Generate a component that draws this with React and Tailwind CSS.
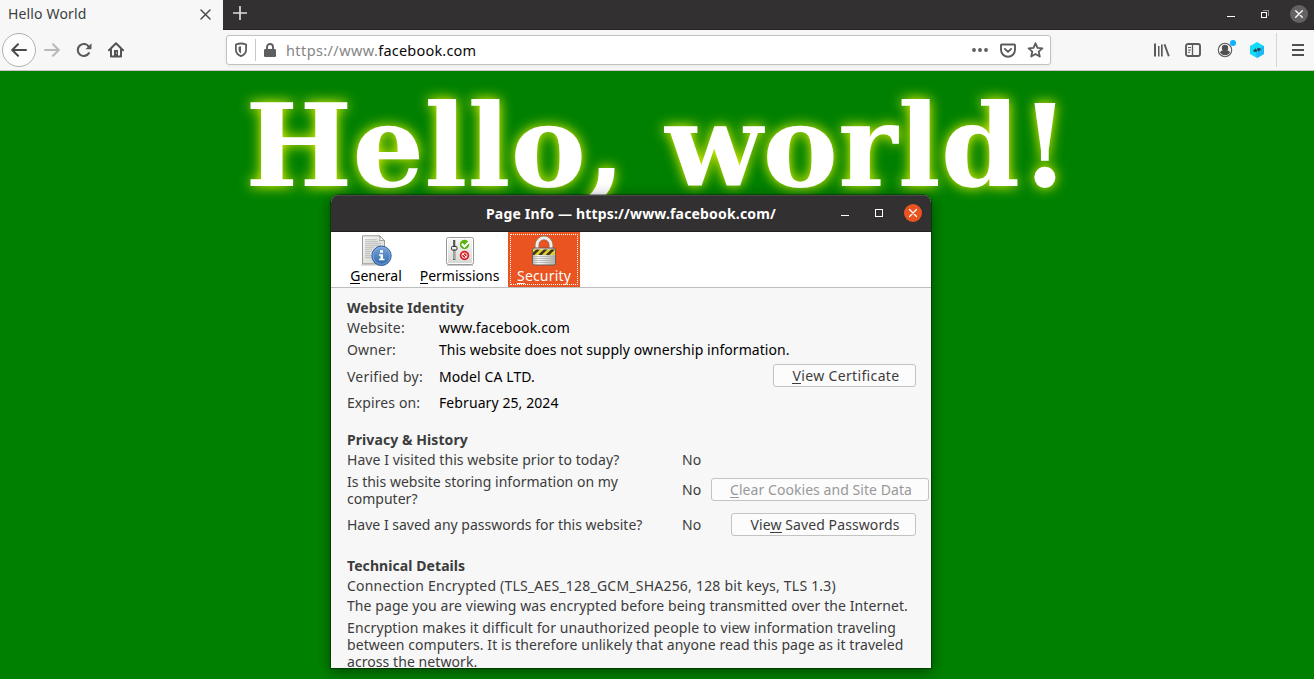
import React from 'react';

function Key({ children }) {
  return <span className="relative after:absolute after:inset-x-0 after:bottom-[1px] after:h-px after:bg-current">{children}</span>;
}

function TabBar() {
  return (
    <div className="flex h-[30px] bg-[#333031]">
      <div className="flex w-[223px] items-center justify-between bg-[#f7f7f7] pb-[3px] pl-2 pr-[12px]">
        <span className="tracking-[0.15px] text-[#3d3d3d]">Hello World</span>
        <svg width="11" height="11" viewBox="0 0 11 11" className="mt-[2px]" stroke="#4c4c4c" strokeWidth="1.5" strokeLinecap="round"><path d="M1 1l9 9M10 1l-9 9" /></svg>
      </div>
      <div className="flex flex-1 items-center border-b border-[#242122] pb-px pl-[10px] pr-[6px]">
        <svg width="14" height="14" viewBox="0 0 14 14" className="-mt-[2px]" stroke="#dedddd" strokeWidth="1.7" strokeLinecap="round"><path d="M7 .5v13M.5 7h13" /></svg>
        <div className="flex-1" />
        <svg width="8" height="10" viewBox="0 0 8 10" shapeRendering="crispEdges"><path d="M0 7h8v1H0z" fill="#fff" /></svg>
        <svg width="8" height="8" viewBox="0 0 8 8" className="ml-[26px] mr-[21px]" fill="none" shapeRendering="crispEdges"><path d="M2 .5h5.500v5.500" stroke="#918f90" /><path d="M.5 2.500h5v5h-5z" stroke="#fff" /></svg>
        <svg width="18" height="18" viewBox="0 0 18 18" className="mt-[-1px]"><circle cx="9" cy="9" r="9" fill="#646263" /><path d="M5.700 5.700l6.600 6.600M12.300 5.700l-6.600 6.600" stroke="#fff" strokeWidth="1.300" strokeLinecap="round" /></svg>
      </div>
    </div>
  );
}

function AddressBar() {
  return (
    <div className="ml-[102px] flex h-[30px] w-[825px] items-center rounded-[3px] border border-[#c1c1c1] bg-white shadow-[0_1px_4px_rgba(0,0,0,0.06)]">
      <svg width="14" height="16" viewBox="0 0 14 16" className="ml-[7px]"><path d="M7 1.500c1.800 0 3.500.4 5.100 1v5.200c0 3-1.900 5.200-5.100 6.500-3.200-1.300-5.100-3.500-5.100-6.500V2.500c1.600-.6 3.300-1 5.100-1z" fill="none" stroke="#5e5e5e" strokeWidth="1.800" strokeLinejoin="round" /><path d="M7 4.300c-1 0-1.700.2-2.400.4v3c0 1.700.9 2.900 2.400 3.800z" fill="#5e5e5e" /></svg>
      <div className="ml-[7px] h-[22px] w-px bg-[#c8c8c8]" />
      <svg width="12" height="14" viewBox="0 0 12 14" className="ml-[8px]"><path d="M3 7V4a3 3 0 016 0v3" fill="none" stroke="#5e5e5e" strokeWidth="1.900" /><rect x="0" y="6" width="12" height="8" rx="1.200" fill="#5e5e5e" /></svg>
      <span className="ml-[10px] mt-[2px] text-[14.5px] tracking-[0.4px] text-[#858585]">https://www.<span className="tracking-[0.2px] text-[#0a0a0a]">facebook.com</span></span>
      <div className="flex-1" />
      <svg width="16" height="4" viewBox="0 0 16 4" fill="#5b5b5b"><circle cx="2" cy="2" r="1.900" /><circle cx="8" cy="2" r="1.900" /><circle cx="14" cy="2" r="1.900" /></svg>
      <svg width="16" height="15" viewBox="0 0 16 15" className="ml-[12px] mr-[11px]" fill="none" stroke="#5b5b5b" strokeWidth="1.900" strokeLinejoin="round" strokeLinecap="round"><path d="M1.900 1.500h12.200a.9.9 0 01.9.9v4.400a7 7 0 01-14 0V2.400a.9.9 0 01.9-.9z" /><path d="M4.900 5.900L8 8.900l3.100-3" /></svg>
      <svg width="17" height="16" viewBox="0 0 17 16" className="mr-[6px]" fill="none" stroke="#5b5b5b" strokeWidth="1.800" strokeLinejoin="round"><path d="M8.500 1.300l2 4.500 4.900.5-3.700 3.300 1.100 4.900-4.300-2.500-4.300 2.500 1.100-4.900L1.600 6.300l4.900-.5z" /></svg>
    </div>
  );
}

function NavBar() {
  return (
    <div className="flex h-[41px] items-center border-b border-[#c6c6c6] bg-[#f7f7f7] pl-[2px]">
      <div className="flex size-[34px] items-center justify-center rounded-full border border-[#b0b0b0] bg-[#fdfdfd]">
        <svg width="16" height="14" viewBox="0 0 16 14" fill="none" stroke="#4a4a4a" strokeWidth="2" strokeLinecap="round" strokeLinejoin="round"><path d="M15 7H1.300M7 1.200L1.200 7 7 12.800" /></svg>
      </div>
      <svg width="16" height="14" viewBox="0 0 16 14" className="ml-[8px]" fill="none" stroke="#b9b9b9" strokeWidth="2" strokeLinecap="round" strokeLinejoin="round"><path d="M1 7h13.700M9 1.200L14.800 7 9 12.800" /></svg>
      <svg width="16" height="16" viewBox="0 0 16 16" className="ml-[16px]"><path d="M12.900 11.100a6 6 0 11.100-6.100" fill="none" stroke="#5b5b5b" strokeWidth="2.100" strokeLinecap="round" /><path d="M15.500 1.200v5.400a.7.700 0 01-.7.7H9.500z" fill="#5b5b5b" /></svg>
      <svg width="16" height="16" viewBox="0 0 16 16" className="ml-[16px]" fill="none" stroke="#555" strokeWidth="2" strokeLinejoin="round" strokeLinecap="round"><path d="M1 8.200L8 1.200l7 7M3 7.500V14.500h10V7.500" /><path d="M6 8h4v6H6z" fill="#555" stroke="none" /><path d="M8 10.500h1v1H8z" fill="#f7f7f7" stroke="none" /></svg>
      <AddressBar />
      <div className="flex-1" />
      <svg width="16" height="14" viewBox="0 0 16 14" className="mr-[-1px]" fill="#5b5b5b"><path d="M0 .5h2v13H0zM4 3h1.500v10.500H4zM7 1.500h1.700v12H7z" /><path d="M10.500 1.200l4.300 12" stroke="#5b5b5b" strokeWidth="1.900" /></svg>
      <svg width="16" height="14" viewBox="0 0 16 14" className="ml-[16px]" fill="none" stroke="#5b5b5b"><rect x="1" y="1" width="14" height="12" rx="2" strokeWidth="1.900" /><path d="M7.500 1v12" strokeWidth="1.300" /><path d="M3 4.500h3M3 7h3M3 9.300h2" strokeWidth="1" /></svg>
      <svg width="19" height="20" viewBox="0 0 19 20" className="ml-[16px] mt-[-4px]"><circle cx="8" cy="12" r="6.700" fill="none" stroke="#5b5b5b" strokeWidth="1.100" /><circle cx="8" cy="9.900" r="3.200" fill="#4f4f4f" /><path d="M3 14.200c1-1.700 2.400-1.900 5-1.900s4 .2 5 1.900A5.600 5.600 0 018 17.200a5.600 5.600 0 01-5-3z" fill="#4f4f4f" /><circle cx="16" cy="5" r="3" fill="#0bb2ff" /></svg>
      <svg width="16" height="16" viewBox="0 0 16 16" className="ml-[13px]"><path d="M8 0l7 4v8L8 16l-7-4V4z" fill="#14dcf8" /><path d="M15 4v8L8 16l-1-4 5-7z" fill="#1fb8f6" /><path d="M3.800 9.300L6.600 6.300l.6 1.300 1.500-.4-.5-1.500 4.200 1-2.900 3-.6-1.300-1.400.4.5 1.500z" fill="#24434d" /></svg>
      <div className="ml-[11px] h-[34px] w-px bg-[#d6d6d6]" />
      <svg width="12" height="12" viewBox="0 0 12 12" className="ml-[15px] mr-[10px]" stroke="#4f4f4f" strokeWidth="2"><path d="M0 1h12M0 6h12M0 11h12" /></svg>
    </div>
  );
}

function GeneralIcon() {
  return (
    <svg width="32" height="32" viewBox="0 0.7 32 32">
      <defs>
        <linearGradient id="info" x1="0" y1="0" x2="0" y2="1"><stop offset="0" stopColor="#7ba7dc" /><stop offset="1" stopColor="#2f66ab" /></linearGradient>
        <linearGradient id="paper" x1="0" y1="0" x2="1" y2="1"><stop offset="0" stopColor="#f7f7f5" /><stop offset="1" stopColor="#d3d3d0" /></linearGradient>
      </defs>
      <path d="M1 29.500h22v2H1z" fill="#d8d8d8" />
      <path d="M2.500 1.500h17l5 5v23h-22z" fill="url(#paper)" stroke="#999b96" />
      <path d="M19.500 1.500c.8 2 .6 3.800 0 5.200 2-.7 3.500-.6 5-.2z" fill="#fff" stroke="#888a85" strokeWidth=".8" />
      <path d="M5 5.500h12M5 7.500h13M5 9.500h16M5 11.500h16M5 13.500h9M5 15.500h7M5 17.500h6M5 19.500h5M5 21.500h6M5 23.500h6" stroke="#b4b5b2" strokeWidth=".9" />
      <circle cx="21.500" cy="21.500" r="9.700" fill="url(#info)" stroke="#2f5f9c" />
      <circle cx="21.500" cy="21.500" r="8.500" fill="none" stroke="#90b5e2" strokeWidth=".7" />
      <path d="M20 16h3v2.500h-3zM19 20h4v4.500h1.500V26H19v-1.500h1.500v-3H19z" fill="#fff" />
    </svg>
  );
}

function PermissionsIcon() {
  return (
    <svg width="32" height="32" viewBox="0 0 32 32">
      <defs><linearGradient id="panel" x1="0" y1="0" x2="0" y2="1"><stop offset="0" stopColor="#f8f8f7" /><stop offset="1" stopColor="#d6d7d4" /></linearGradient></defs>
      <path d="M3 30.500h26" stroke="#c9c9c9" />
      <rect x="2.500" y="2.500" width="27" height="27" rx="2" fill="url(#panel)" stroke="#989a95" />
      <rect x="3.500" y="3.500" width="25" height="25" rx="1" fill="none" stroke="#fff" />
      <path d="M10.200 5v20" stroke="#555753" strokeWidth="2.200" />
      <path d="M10.200 16v8" stroke="#a9aaa7" strokeWidth="2" />
      <rect x="7.500" y="11.500" width="5.500" height="3.500" rx="1" fill="#eeeeec" stroke="#2e3436" />
      <circle cx="20.500" cy="9.500" r="4.700" fill="#59b512" />
      <path d="M17.800 8.800l2.600 2.700 4.600-4.400" fill="none" stroke="#fff" strokeWidth="2" />
      <circle cx="20.500" cy="20.500" r="4.700" fill="#db1b1f" />
      <circle cx="20.500" cy="20.500" r="2.600" fill="none" stroke="#fff" strokeWidth="1" /><path d="M18.700 18.700l3.600 3.600" stroke="#fff" />
    </svg>
  );
}

function SecurityIcon() {
  return (
    <svg width="32" height="32" viewBox="0 0 32 32">
      <defs>
        <linearGradient id="body" x1="0" y1="0" x2="1" y2="0"><stop offset="0" stopColor="#b9bab7" /><stop offset=".25" stopColor="#fafafa" /><stop offset="1" stopColor="#b0b1ae" /></linearGradient>
        <clipPath id="band"><path d="M5 14.500h22v5.500H5z" /></clipPath>
      </defs>
      <path d="M9 13.500V9.900a7 7 0 0114 0v3.600" fill="none" stroke="#8b7d73" strokeWidth="4.200" />
      <path d="M9 13.500V9.900a7 7 0 0114 0v3.600" fill="none" stroke="#eeeeec" strokeWidth="2.900" />
      <rect x="4.500" y="13" width="23" height="17" rx="1.500" fill="url(#body)" stroke="#6b5a50" />
      <path d="M5 14.500h22v5.500H5z" fill="#e5cb2d" />
      <g clipPath="url(#band)" stroke="#38361f" strokeWidth="2.600"><path d="M4 20.500l7-7M11.500 20.500l7-7M19 20.500l7-7" /></g>
      <path d="M5 21.500h22M5 23.500h22M5 25.500h22M5 27.500h22" stroke="#aaaba7" strokeWidth=".7" />
    </svg>
  );
}

function DialogTab({ icon, letter, rest, className }) {
  return (
    <div className={`flex flex-col items-center leading-[17px] ${className}`}>
      {icon}
      <span><Key>{letter}</Key>{rest}</span>
    </div>
  );
}

function Heading({ children, className = '' }) {
  return <h2 className={`flex h-5 items-center font-bold tracking-[0.075px] ${className}`}>{children}</h2>;
}

function Field({ label, value, className, labelClass, valueClass, children }) {
  return (
    <div className={`flex items-center pr-[15px] ${className}`}>
      <span className={`w-[92px] ${labelClass}`}>{label}</span>
      <span className={`flex-1 text-black ${valueClass}`}>{value}</span>
      {children}
    </div>
  );
}

function Question({ text, className, textClass, children }) {
  return (
    <div className={`flex items-center ${className}`}>
      <span className={`w-[335px] whitespace-pre-line ${textClass}`}>{text}</span>
      <span className="w-[29px]">No</span>
      <div className="flex flex-1 justify-end">{children}</div>
    </div>
  );
}

function Button({ className, children }) {
  return <button className={`flex h-[23px] items-center justify-center rounded-[3px] border border-[#c3c3c3] bg-[#fcfcfc] ${className}`}><span>{children}</span></button>;
}

function PageInfo() {
  return (
    <section className="absolute left-[331px] top-[195px] flex h-[473px] w-[600px] flex-col overflow-hidden rounded-t-[8px] bg-[#f7f7f7] leading-[17px] text-[#3c3c3c] shadow-[0_0_0_1px_rgba(0,0,0,0.35),0_3px_14px_1px_rgba(0,0,0,0.42)]">
      <header className="flex h-[37px] shrink-0 items-center border-b border-t border-b-[#232021] border-t-[#4d4a4b] bg-[#333031] pl-[155px] pr-[9px] text-white">
        <h1 className="w-[355px] font-bold tracking-[0.17px]">Page Info — https://www.facebook.com/</h1>
        <svg width="8" height="8" viewBox="0 0 8 8" className="-mt-px" shapeRendering="crispEdges"><path d="M0 6h8v1H0z" fill="#fff" /></svg>
        <svg width="8" height="8" viewBox="0 0 8 8" className="-mt-px ml-[26px] mr-[21px]" shapeRendering="crispEdges"><path d="M.5.5h7v7h-7z" fill="none" stroke="#fff" /></svg>
        <svg width="18" height="18" viewBox="0 0 18 18" className="-mt-[1px]"><circle cx="9" cy="9" r="9" fill="#e95420" /><path d="M5.500 5.500l7 7M12.500 5.500l-7 7" stroke="#fff" strokeWidth="1.300" strokeLinecap="round" /></svg>
      </header>
      <nav className="flex h-[56px] shrink-0 border-b border-[#bdbdbd] bg-white pl-[10px] text-black">
        <DialogTab icon={<GeneralIcon />} letter="G" rest="eneral" className="w-[70px] pt-[3px]" />
        <DialogTab icon={<PermissionsIcon />} letter="P" rest="ermissions" className="w-[97px] pt-[3px]" />
        <div className="w-[72px] bg-[#e95420] p-[2px]">
          <DialogTab icon={<SecurityIcon />} letter="S" rest="ecurity" className="h-[51px] pt-px tracking-[0.18px] text-white outline-1 -outline-offset-1 outline-dotted outline-white" />
        </div>
      </nav>
      <div className="flex flex-col pl-4 pt-[9px]">
        <Heading>Website Identity</Heading>
        <Field className="h-5" label="Website:" labelClass="tracking-[0.2px]" value="www.facebook.com" valueClass="tracking-[0.15px]" />
        <Field className="h-6" label="Owner:" labelClass="tracking-[0.16px]" value="This website does not supply ownership information." valueClass="tracking-[0.06px]" />
        <Field className="h-[30px]" label="Verified by:" labelClass="tracking-[0.23px]" value="Model CA LTD." valueClass="tracking-[0.1px]">
          <Button className="mb-px w-[143px] pl-[3px] tracking-[0.35px]"><Key>V</Key>iew Certificate</Button>
        </Field>
        <Field className="h-[22px]" label="Expires on:" labelClass="tracking-[0.09px]" value="February 25, 2024" valueClass="tracking-[0.085px]" />
        <Heading className="mt-4">Privacy &amp; History</Heading>
        <Question className="h-5" textClass="tracking-[0.055px]" text="Have I visited this website prior to today?" />
        <Question className="h-10 pr-[2px]" textClass="pt-[2px] tracking-[0.015px]" text={'Is this website storing information on my\ncomputer?'}>
          <Button className="w-[218px] pl-[2px] tracking-[0.06px] text-[#989898]"><Key>C</Key>lear Cookies and Site Data</Button>
        </Question>
        <Question className="h-[30px] pr-[15px]" textClass="" text="Have I saved any passwords for this website?">
          <Button className="w-[185px] pl-[3px] tracking-[0.095px]">Vie<Key>w</Key> Saved Passwords</Button>
        </Question>
        <Heading className="mt-4">Technical Details</Heading>
        <p className="flex h-5 items-center tracking-[0.215px]">Connection Encrypted (TLS_AES_128_GCM_SHA256, 128 bit keys, TLS 1.3)</p>
        <p className="flex h-5 items-center tracking-[0.08px]">The page you are viewing was encrypted before being transmitted over the Internet.</p>
        <p className="mt-[4px] whitespace-nowrap tracking-[0.07px]">
          <span className="tracking-[0.114px]">Encryption makes it difficult for unauthorized people to view information traveling</span><br />
          between computers. It is therefore unlikely that anyone read this page as it traveled<br />
          across the network.
        </p>
      </div>
    </section>
  );
}

export default function App() {
  return (
    <div className="relative flex h-[679px] w-[1314px] flex-col overflow-hidden bg-[#008000] font-['Noto_Sans',sans-serif] text-[14px]">
      <TabBar />
      <NavBar />
      <main className="flex justify-center">
        <h1 className="ml-px mt-[8px] whitespace-nowrap font-['DejaVu_Serif',serif] text-[113.33px] font-bold leading-[136px] text-white [text-shadow:0_0_13px_#ffff00]">Hello, world!</h1>
      </main>
      <PageInfo />
    </div>
  );
}
